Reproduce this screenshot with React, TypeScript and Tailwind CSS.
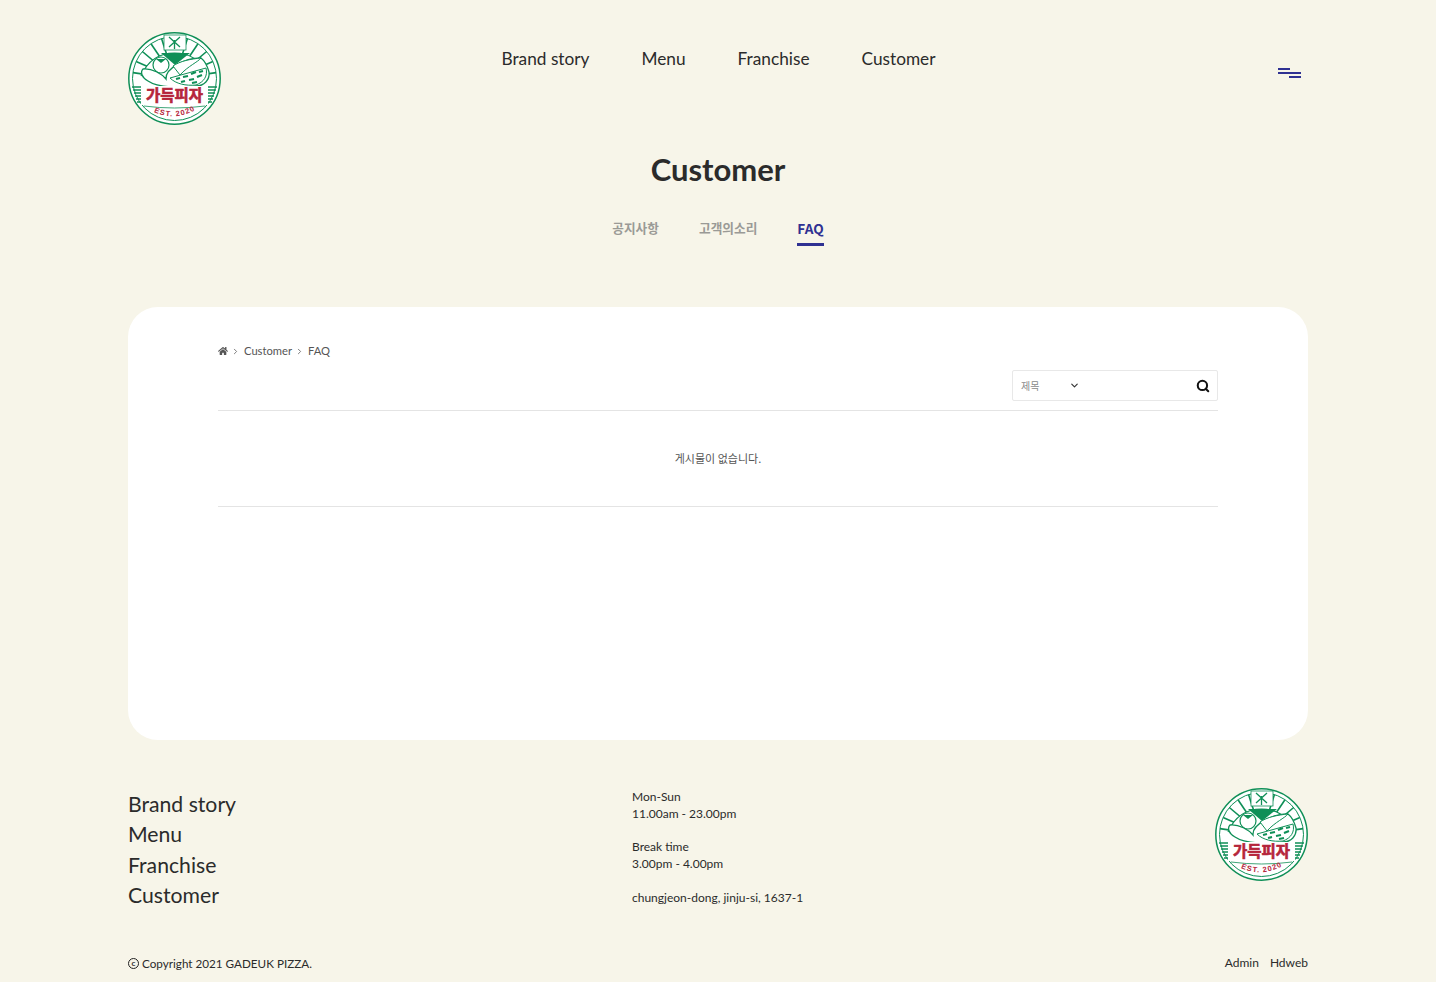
import { ChevronDown, ChevronRight, Search } from "lucide-react";
import { FaHome } from "react-icons/fa";

const navItems = ["Brand story", "Menu", "Franchise", "Customer"];
const green = "#0f8f57";
const hatch = [0, 1, 2, 3, 4, 5];

function Logo({ id }: { id: string }) {
  const rays = [-82, -66, -50, -34, -18, 18, 34, 50, 66, 82];
  return (
    <svg viewBox="0 0 93 93" className="w-[93px] h-[93px] shrink-0" aria-label="가득피자">
      <circle cx="46.5" cy="46.5" r="45.7" fill="#fff" stroke={green} strokeWidth="1.5" />
      <circle cx="46.5" cy="46.5" r="42" fill="none" stroke={green} strokeWidth="1" />
      {rays.map((a) => (
        <line
          key={a}
          x1="46.5"
          y1="22"
          x2="46.5"
          y2="4.5"
          stroke={green}
          strokeWidth="1.6"
          transform={`rotate(${a} 46.5 46.5)`}
        />
      ))}
      <path d="M13 44 C20 28 32 21 46.5 21 C61 21 74 28 80 44" fill="#fff" stroke={green} strokeWidth="1.2" />
      <path d="M33 21 H62 L47 33 Z" fill={green} />
      <rect x="36" y="3" width="22" height="15" fill="#fff" stroke={green} strokeWidth="0.8" />
      <path d="M41 5 L52 15 M52 5 L41 15 M46.5 8 V17" stroke={green} strokeWidth="1.3" fill="none" />
      <circle cx="33" cy="33" r="8" fill="#fff" stroke={green} strokeWidth="1.2" />
      <path d="M28 27 L33 31 L38 27" fill={green} />
      <path
        d="M15 37 C24 36 34 42 38 47 C37 36 58 26 73 26 C77 29 79 33 81 40 C82 48 76 54 68 54 C54 56 30 56 20 49 C14 46 12 40 15 37 Z"
        fill="#fff"
        stroke={green}
        strokeWidth="1.3"
      />
      <path d="M45 34 C52 29 63 27 73 26 C70 30 60 34 52 43 Z" fill="#fff" stroke={green} strokeWidth="1" />
      <path d="M42 46 L78 36 C80 44 76 50 68 53 C58 54 48 52 42 46 Z" fill="#fff" stroke={green} strokeWidth="1" />
      <path
        d="M48 47 l4 -1 M55 45 l5 -1 M63 42 l5 -2 M71 40 l4 -1 M53 50 l4 -1 M61 48 l5 -1 M69 45 l5 -2 M64 51 l5 -1"
        stroke={green}
        strokeWidth="2.2"
      />
      {hatch.map((i) => (
        <path
          key={i}
          d={`M${4 + i} ${55 + i * 3} H13 M${89 - i} ${55 + i * 3} H80`}
          stroke={green}
          strokeWidth="1.3"
        />
      ))}
      <rect x="13" y="54" width="67" height="19" fill="#fff" />
      <text
        x="46.5"
        y="69"
        textAnchor="middle"
        fill="#b5253b"
        stroke="#b5253b"
        strokeWidth="0.6"
        style={{ fontFamily: '"Noto Sans CJK KR", sans-serif', fontWeight: 700, fontSize: "15.5px" }}
      >
        가득피자
      </text>
      <path d="M16 74 Q46.5 78 77 74" fill="none" stroke={green} strokeWidth="0.8" />
      <path id={id} d="M24 79 Q46.5 91 71 76" fill="none" />
      <text
        fill="#b5253b"
        style={{ fontFamily: '"Liberation Sans", sans-serif', fontWeight: 700, fontSize: "7.5px", letterSpacing: "1px" }}
      >
        <textPath href={`#${id}`} startOffset="4%">
          EST. 2020
        </textPath>
      </text>
    </svg>
  );
}

function MenuIcon() {
  return (
    <div className="flex flex-col w-[23px] gap-[2px] mt-[14px]">
      <span className="block h-[2px] w-[12px] bg-[#2f3192]" />
      <span className="block h-[2px] w-[23px] bg-[#2f3192]" />
      <span className="block h-[2px] w-[12px] bg-[#2f3192] self-end" />
    </div>
  );
}

export default function App() {
  return (
    <div className="min-h-[982px] bg-[#f7f5e9] text-[#2b2b2b] font-['Lato','Noto_Sans_CJK_KR',sans-serif] overflow-hidden">
      <div className="w-[1180px] mx-auto">
        <header className="flex justify-between items-start pt-[32px] h-[125px]">
          <Logo id="logo-arc-top" />
          <nav className="flex gap-[52px] text-[17.25px] leading-[24px] pt-[15px] ml-[-62px]">
            {navItems.map((n) => (
              <a key={n}>{n}</a>
            ))}
          </nav>
          <div className="w-[30px] pt-[22px] flex justify-start">
            <MenuIcon />
          </div>
        </header>

        <h1 className="text-center text-[31px] leading-[40px] font-bold mt-[24px]">Customer</h1>

        <div className="flex justify-center gap-[40px] mt-[29px] text-[12.7px] font-bold font-['Noto_Sans_CJK_KR',sans-serif] text-[#9a9a96]">
          <a className="h-[30px] leading-[20px]">공지사항</a>
          <a className="h-[30px] leading-[20px]">고객의소리</a>
          <a className="text-[13.6px] leading-[20px] text-[#2f3192] border-b-[3px] border-[#2f3192] h-[28px]">FAQ</a>
        </div>

        <main className="bg-white rounded-[30px] mt-[59px] h-[433px] px-[90px] pt-[36px]">
          <div className="flex items-center text-[11.2px] leading-[16px] text-[#555] h-[16px]">
            <FaHome className="text-[10px]" />
            <ChevronRight className="w-[9px] h-[9px] mx-[3px]" strokeWidth={2} />
            <span className="ml-[1px]">Customer</span>
            <ChevronRight className="w-[9px] h-[9px] mx-[3px]" strokeWidth={2} />
            <span className="ml-[1px]">FAQ</span>
          </div>

          <div className="flex justify-end mt-[11px] pb-[9px] border-b border-[#e4e4e4]">
            <div className="w-[206px] h-[31px] border border-[#e8e8e8] rounded-[2px] flex items-center pl-[8px] pr-[7px]">
              <span className="text-[10px] text-[#8a8a8a] font-['Noto_Sans_CJK_KR',sans-serif] w-[48px]">제목</span>
              <ChevronDown className="w-[11px] h-[11px] text-[#333]" strokeWidth={2.5} />
              <Search className="w-[14px] h-[14px] ml-auto text-[#111]" strokeWidth={3.5} />
            </div>
          </div>

          <div className="h-[96px] flex items-center justify-center border-b border-[#e4e4e4] text-[11px] text-[#555] font-['Noto_Sans_CJK_KR',sans-serif]">
            게시물이 없습니다.
          </div>
        </main>

        <footer className="flex justify-between mt-[48px]">
          <div className="w-[504px] text-[21.2px] leading-[30.3px] pt-[1px]">
            {navItems.map((n) => (
              <div key={n}>{n}</div>
            ))}
          </div>
          <div className="text-[12px] leading-[17px] flex-1">
            <p>Mon-Sun</p>
            <p>11.00am - 23.00pm</p>
            <p className="mt-[16px]">Break time</p>
            <p>3.00pm - 4.00pm</p>
            <p className="mt-[17px]">chungjeon-dong, jinju-si, 1637-1</p>
          </div>
          <Logo id="logo-arc-bottom" />
        </footer>

        <div className="flex justify-between items-center mt-[45px] text-[11.7px] leading-[16px]">
          <span className="flex items-center gap-[3px]">
            <span className="w-[11px] h-[11px] rounded-full border border-[#222] text-[8px] leading-[9px] text-center font-bold">c</span>
            Copyright 2021 GADEUK PIZZA.
          </span>
          <span className="flex gap-[11px] text-[12px]">
            <a>Admin</a>
            <a>Hdweb</a>
          </span>
        </div>
      </div>
    </div>
  );
}
